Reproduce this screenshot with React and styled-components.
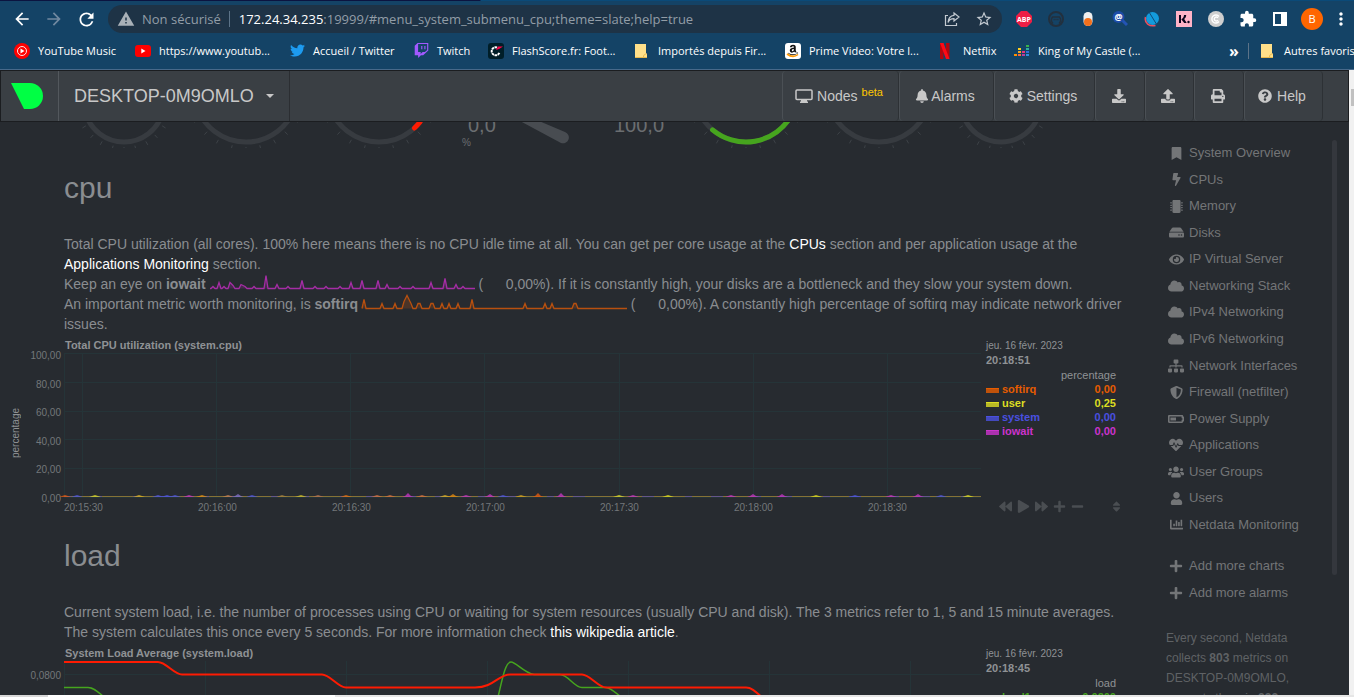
import React from "react";
import styled, { createGlobalStyle } from "styled-components";
import {
  FaBell, FaCog, FaDownload, FaUpload, FaPrint, FaQuestionCircle, FaBookmark, FaBolt,
  FaMicrochip, FaHdd, FaEye, FaCloud, FaSitemap, FaShieldAlt, FaBatteryHalf, FaHeartbeat,
  FaUsers, FaUser, FaChartBar, FaPlus, FaMinus, FaBackward, FaPlay, FaForward, FaSort,
  FaTwitter, FaTwitch, FaAmazon,
} from "react-icons/fa";
import { MdArrowBack, MdArrowForward, MdRefresh, MdWarning, MdStarBorder, MdExtension, MdMoreVert } from "react-icons/md";

const Global = createGlobalStyle`
  *, *::before, *::after { box-sizing: border-box; }
  html, body { margin: 0; background: #272b30; }
  body { font: 14px/20px "Liberation Sans", Arial, sans-serif; color: #8a8d90; }
  button { font: inherit; color: inherit; background: none; border: 0; padding: 0; }
  a { color: inherit; text-decoration: none; }
`;

const Window = styled.div`
  height: 100vh;
  display: flex;
  flex-direction: column;
  overflow: hidden;
`;

/* ---------- browser frame ---------- */

const Chrome = styled.header`
  flex: none;
  background: #144366;
  border-bottom: 1px solid #47698a;
  font: 11px/16px "Open Sans", "Noto Sans", sans-serif;
  color: #fff;
`;
const TabEdge = styled.div`
  height: 1px;
  background: linear-gradient(90deg, #0b1440 0 480px, #0b4a78 481px);
`;
const Toolbar = styled.div`
  display: flex;
  align-items: center;
  height: 36px;
  padding-left: 6px;
`;
const ToolButton = styled.button`
  flex: none;
  width: ${(p) => p.$w || 32}px;
  height: 28px;
  display: grid;
  place-items: center;
  color: ${(p) => p.$color || "#fff"};
`;
const Omnibox = styled.div`
  flex: 1;
  min-width: 0;
  display: flex;
  align-items: center;
  height: 28px;
  margin: 0 6px;
  padding: 0 2px 0 9px;
  border-radius: 14px;
  background: #1e3346;
  font-size: 13px;
  color: #929da7;
`;
const Security = styled.span`
  padding: 0 8px 0 7px;
  white-space: nowrap;
`;
const Rule = styled.span`
  flex: none;
  width: 1px;
  height: 16px;
  margin-right: ${(p) => p.$gap || 9}px;
  background: #5c7388;
`;
const Host = styled.label`
  color: #fff;
`;
const Address = styled.input`
  flex: 1;
  min-width: 0;
  padding: 0;
  border: 0;
  outline: 0;
  background: none;
  font: inherit;
  color: inherit;
`;
const Bookmarks = styled.nav`
  display: flex;
  align-items: center;
  height: 32px;
  padding: 0 0 5px 14px;
`;
const Bookmark = styled.a`
  flex: none;
  width: ${(p) => p.$w}px;
  display: flex;
  align-items: center;
  gap: 8px;
  white-space: nowrap;
  svg { flex: none; }
`;
const Filler = styled.span`
  flex: 1;
`;
const More = styled.button`
  width: 28px;
  font-size: 16px;
  font-weight: 700;
`;
const Avatar = styled.span`
  display: grid;
  place-items: center;
  width: 22px;
  height: 22px;
  border-radius: 50%;
  background: #ff6600;
  font-size: 11px;
`;

/* ---------- page frame ---------- */

const Body = styled.div`
  flex: 1;
  min-height: 0;
  display: flex;
`;
const Page = styled.div`
  flex: 1;
  min-width: 0;
  overflow: hidden;
  background: #272b30;
`;
const ScrollTrack = styled.div`
  flex: none;
  width: 5px;
  padding: 19px 0 0 2px;
  background: #f1f1f1;
`;
const ScrollThumb = styled.div`
  height: 17px;
  background: #c1c1c1;
`;
const StatusEdge = styled.div`
  flex: none;
  height: 2px;
  background: linear-gradient(90deg, #d8d8d8 0 48px, #fff 48px 335px, #e6e6e6 335px);
`;
const Navbar = styled.nav`
  display: flex;
  height: 52px;
  border: 1px solid #1b1d20;
  background: #3a3f44;
  color: #c8c8c8;
  text-shadow: 1px 1px 1px rgba(0, 0, 0, 0.4);
`;
const LogoLink = styled.a`
  width: 58px;
  display: flex;
  align-items: center;
  padding-left: 9px;
  border-right: 1px solid #53585d;
`;
const HostMenu = styled.button`
  width: 231px;
  display: flex;
  align-items: center;
  gap: 12px;
  padding-left: 15px;
  border-right: 1px solid #2b2e32;
  font-size: 18px;
`;
const Caret = styled.span`
  border: 4px solid transparent;
  border-top-color: #c8c8c8;
  border-bottom: 0;
`;
const NavItem = styled.button`
  width: ${(p) => p.$w}px;
  display: flex;
  align-items: center;
  justify-content: center;
  gap: ${(p) => p.$gap || 0}px;
  padding-right: 3px;
  border-left: 1px solid #4b5055;
  border-right: 1px solid #2d3135;
  border-radius: 4px;
`;
const Beta = styled.sup`
  align-self: center;
  margin-bottom: 8px;
  font-size: 11px;
  line-height: 10px;
  color: #ffc800;
`;
const NavEnd = styled.span`
  width: 25px;
`;
const Columns = styled.div`
  display: flex;
`;
const Main = styled.main`
  flex: 1;
  min-width: 0;
`;
const Gauges = styled.div`
  display: flex;
  height: 26px;
  padding-left: 64px;
  svg { flex: none; display: block; }
`;
const Heading = styled.h1`
  margin: 23px 0 29px;
  padding-left: 64px;
  font-size: 30px;
  font-weight: 400;
  line-height: 34px;
`;
const Help = styled.p`
  margin: 0;
  padding: 0 5px 0 64px;
`;
const Strong = styled.a`
  color: #fff;
`;
const Value = styled.span`
  display: inline-block;
  width: 50px;
  text-align: right;
`;

/* ---------- charts ---------- */

const ChartBox = styled.section`
  display: grid;
  grid-template-columns: 64px minmax(0, 1fr) 150px;
  height: 182px;
  font-size: 10px;
  line-height: 12px;
  color: #73777a;
`;
const AxisSide = styled.div`
  display: flex;
  justify-content: space-between;
  padding: ${(p) => p.$top}px 3px 0 10px;
`;
const AxisTitle = styled.div`
  align-self: flex-start;
  height: 166px;
  writing-mode: vertical-rl;
  transform: rotate(180deg);
  text-align: center;
  color: #8f9295;
`;
const Ticks = styled.div`
  flex: 1;
  display: flex;
  flex-direction: column;
  justify-content: space-between;
  height: ${(p) => p.$h}px;
  text-align: right;
`;
const Plot = styled.div`
  min-width: 0;
  svg { display: block; width: 100%; overflow: visible; }
`;
const ChartTitle = styled.h2`
  margin: 0;
  padding: 4px 0 0 1px;
  height: 19px;
  font-size: 11px;
  line-height: 15px;
  color: #8f9295;
`;
const TimeAxis = styled.div`
  display: flex;
  justify-content: space-between;
  padding: 5px 74px 0 0;
`;
const Legend = styled.div`
  display: flex;
  flex-direction: column;
  padding: 4px 15px 4px 5px;
  font-size: 11px;
  line-height: 14px;
`;
const LegendDate = styled.div`
  font-size: 10px;
  line-height: 15px;
  color: #8f9295;
`;
const LegendTime = styled.div`
  font-weight: 700;
  line-height: 15px;
  color: #8f9295;
`;
const LegendTable = styled.table`
  width: 100%;
  border-collapse: collapse;
  th, td { padding: 0; }
  thead th { text-align: right; font-weight: 400; color: #8f9295; }
`;
const Series = styled.tr`
  color: ${(p) => p.$color};
  font-weight: 700;
  th { text-align: left; }
  td { text-align: right; }
`;
const Swatch = styled.span`
  display: inline-block;
  width: 13px;
  height: 5px;
  margin-right: 3px;
  border-top: 1px solid ${(p) => p.$color};
  background: color-mix(in srgb, ${(p) => p.$color} 80%, #272b30);
`;
const Toolbox = styled.div`
  display: flex;
  margin: auto -14px 0 10px;
  color: #4a4e52;
`;
const ToolboxButton = styled.button`
  width: 18px;
  height: 12px;
  display: grid;
  place-items: center;
  &:last-child { margin-left: 21px; }
`;

/* ---------- sidebar ---------- */

const Sidebar = styled.aside`
  flex: none;
  width: 218px;
  display: flex;
  justify-content: space-between;
  padding: 18px 12px 0 35px;
  font-size: 13px;
  color: #737577;
`;
const MenuList = styled.ul`
  display: grid;
  grid-auto-rows: 1fr;
  height: ${(p) => p.$h}px;
  margin: 0 0 15px;
  padding: 0;
  list-style: none;
`;
const MenuLink = styled.a`
  height: 100%;
  display: grid;
  grid-template-columns: 20px auto;
  align-items: center;
  gap: 3px;
  svg { justify-self: center; }
`;
const Note = styled.p`
  width: 138px;
  margin: 22px 0 0;
  font-size: 12px;
  color: #5f6265;
`;
const MenuScroll = styled.div`
  width: 5px;
  height: 435px;
  border-radius: 3px;
  background: #34373d;
`;

/* ---------- drawings ---------- */

const FolderIcon = () => (
  <svg width="16" height="16" viewBox="0 0 16 16">
    <path d="M1 1h11v9l1 1v4H1z" fill="#ffe08a" />
    <path d="M1 14.500h12M9.500 14c0-2 1-3 3-3" fill="none" stroke="#e8b84c" />
  </svg>
);
const YtMusicIcon = () => (
  <svg width="16" height="16" viewBox="0 0 16 16">
    <circle cx="8" cy="8" r="8" fill="#f00" />
    <circle cx="8" cy="8" r="4.500" fill="none" stroke="#fff" strokeWidth=".9" />
    <path d="M6.500 5.500v5L10.500 8z" fill="#fff" />
  </svg>
);
const YoutubeIcon = () => (
  <svg width="16" height="16" viewBox="0 0 16 16">
    <rect y="2" width="16" height="12" rx="3" fill="#f00" />
    <path d="M6.300 5.500v5L10.500 8z" fill="#fff" />
  </svg>
);
const FlashIcon = () => (
  <svg width="16" height="16" viewBox="0 0 16 16">
    <rect width="16" height="16" rx="3" fill="#001e28" />
    <path d="M9 4.500a4 4 0 1 0 2.500 5" fill="none" stroke="#fff" strokeWidth="2" strokeDasharray="2.500 .6" />
    <path d="M8 7l2-3.500h5L11 6z" fill="#ff0046" />
  </svg>
);
const AmazonIcon = () => (
  <svg width="16" height="16" viewBox="0 0 16 16">
    <rect width="16" height="16" rx="3" fill="#fff" />
    <g transform="translate(2 1)"><FaAmazon size={12} color="#111" /></g>
    <path d="M2 11q6 4.500 11 .5" fill="none" stroke="#f90" strokeWidth="1.600" />
  </svg>
);
const NetflixIcon = () => (
  <svg width="16" height="16" viewBox="0 0 16 16">
    <path d="M1 0h3.500v16H1zM7 0h3.500v16H7z" fill="#b1060f" />
    <path d="M1 0h3.500l6 16H7z" fill="#ff0a16" />
  </svg>
);
const DEEZER = [
  [0, 11, "#ff9000"], [4, 11, "#f5693c"], [8, 11, "#b53da0"], [12, 11, "#2d8fe0"],
  [4, 8, "#f5a623"], [8, 8, "#e8337c"], [12, 8, "#2f6fd6"], [4, 5, "#ffce1f"], [12, 5, "#2fb0a0"], [12, 2, "#38b24a"],
];
const DeezerIcon = () => (
  <svg width="16" height="16" viewBox="0 0 16 16">
    {DEEZER.map(([x, y, c]) => <rect key={`${x}-${y}`} x={x} y={y} width="3" height="2" fill={c} />)}
  </svg>
);
const ShareIcon = () => (
  <svg width="16" height="16" viewBox="0 0 16 16" fill="none" stroke="#c3cad1" strokeWidth="1.200">
    <path d="M4 4.500H1.500v10h11V12M10 2l5 4-5 4V7.700C7 7.700 5 9 4 11.500 4.300 7.500 6.500 4.600 10 4.300z" />
  </svg>
);
const AbpIcon = () => (
  <svg width="16" height="16" viewBox="0 0 16 16">
    <path d="M5 0h6l5 5v6l-5 5H5l-5-5V5z" fill="#ed1e45" />
    <text x="8" y="10.500" textAnchor="middle" fontSize="7" fontWeight="700" fill="#fff">ABP</text>
  </svg>
);
const HeadsetIcon = () => (
  <svg width="16" height="16" viewBox="0 0 16 16" fill="none" stroke="#22303e" strokeWidth="2">
    <circle cx="8" cy="8" r="7" />
    <path d="M5 12.500c-2-2-2-4.500-.5-6.500h7c1.500 2 1.500 4.500-.5 6.500" strokeWidth="1.500" />
    <path d="M5.500 8.500h5" strokeWidth="1.500" strokeDasharray="1.200 .7" />
  </svg>
);
const PillIcon = () => (
  <svg width="16" height="16" viewBox="0 0 16 16">
    <rect x="3.500" y="1" width="9" height="14" rx="4.500" fill="#efefef" /><circle cx="8" cy="11" r="4" fill="#f3701c" />
  </svg>
);
const AtSearchIcon = () => (
  <svg width="16" height="16" viewBox="0 0 16 16">
    <path d="M10 9l5 5" stroke="#2454b4" strokeWidth="3" /><circle cx="6.500" cy="6" r="6" fill="#1d4ca8" />
    <text x="6.500" y="9" textAnchor="middle" fontSize="9" fontWeight="700" fill="#fff">@</text>
  </svg>
);
const GlobeIcon = () => (
  <svg width="16" height="16" viewBox="0 0 16 16">
    <circle cx="8.500" cy="7.500" r="6.500" fill="#139bdc" /><path d="M5 1l8 13" stroke="#114a78" />
    <path d="M1.500 6c-1.500 6 4 10 10 8.500" fill="none" stroke="#e8505e" strokeWidth="1.500" />
  </svg>
);
const KlarnaIcon = () => (
  <svg width="16" height="16" viewBox="0 0 16 16">
    <rect width="16" height="16" fill="#ffb3c7" />
    <path d="M3 4h2v8H3zM8 4h2.200c0 2-1 3.200-2 4l2.500 4H8.200L5.300 8.200C7 7.300 8 6 8 4z" fill="#0b051d" />
    <circle cx="12.500" cy="11" r="1.200" fill="#0b051d" />
  </svg>
);
const CoinIcon = () => (
  <svg width="16" height="16" viewBox="0 0 16 16">
    <circle cx="8" cy="8" r="8" fill="#cfcfcf" />
    <path d="M11 5.500a4 4 0 1 0 0 5M10 7a2 2 0 1 0 0 2" fill="none" stroke="#fff" strokeWidth="1.400" />
  </svg>
);
const PanelIcon = () => (
  <svg width="14" height="14" viewBox="0 0 14 14"><path d="M0 0h14v14H0zM2 2v10h6V2z" fill="#fff" fillRule="evenodd" /></svg>
);
const NetdataLogo = () => (
  <svg width="34" height="26" viewBox="0 0 34 26"><path d="M1 0h19a13 13 0 0 1 0 26h-6z" fill="#00ff44" /></svg>
);
const MonitorIcon = () => (
  <svg width="18" height="14" viewBox="0 0 18 14">
    <rect x="1" y="1" width="16" height="9.500" rx="1" fill="none" stroke="#c8c8c8" strokeWidth="1.500" />
    <path d="M6 11h6v1.500h1V14H5v-1.500h1z" fill="#c8c8c8" />
  </svg>
);

const point = (cx, cy, r, deg) => {
  const a = (deg * Math.PI) / 180;
  return [cx + r * Math.cos(a), cy + r * Math.sin(a)];
};
const arc = (cx, cy, r, a, b) => `M${point(cx, cy, r, a)}A${r} ${r} 0 0 1 ${point(cx, cy, r, b)}`;

function Gauge({ width, radius, fill, from, to }) {
  const cx = width / 2;
  const cy = 22 - radius;
  const r = radius - 2;
  const marks = [32, 47, 61, 76, 90, 104, 119, 133, 148];
  return (
    <svg width={width} height="26" viewBox={`0 0 ${width} 26`} fill="none">
      <path d={arc(cx, cy, r, 15, 165)} stroke="#373b40" strokeWidth="5" />
      {marks.map((m) => (
        <path key={m} d={`M${point(cx, cy, radius + 3, m)}L${point(cx, cy, radius + 7, m)}`} stroke="#3d4247" />
      ))}
      {fill && <path d={arc(cx, cy, r, from, to)} stroke={fill} strokeWidth="5" strokeLinecap="round" />}
    </svg>
  );
}
const MainGauge = () => (
  <svg width="225" height="26" viewBox="0 0 225 26" fill="#6b6e71" fontSize="20">
    <text x="18" y="10">0,0</text>
    <text x="164" y="10">100,0</text>
    <text x="12" y="24" fontSize="10">%</text>
    <path d="M70-1h19l26 11a5.500 5.500 0 0 1-4 11z" fill="#484c51" />
  </svg>
);

const IOWAIT = [[3, 2], [9, 6], [14, 2], [20, 6], [23, 3], [31, 4], [35, 2], [44, 2], [56, 13], [67, 4], [78, 2], [92, 8], [105, 2], [116, 2], [130, 2], [141, 6], [152, 8], [168, 8], [177, 4], [190, 2], [203, 2], [221, 6], [235, 10], [246, 4], [253, 2]];
const SOFTIRQ = [[2, 9], [20, 5], [33, 5], [42, 7], [45, 13], [49, 5], [56, 5], [58, 5], [69, 5], [71, 5], [80, 5], [87, 5], [96, 5], [110, 9], [163, 5], [183, 5], [190, 5], [212, 5], [214, 5]];

const InlineChart = styled.svg`
  overflow: visible;
`;

function Sparkline({ spikes, color }) {
  let d = "M0 13.500";
  spikes.forEach(([x, h], i) => {
    const prev = i ? spikes[i - 1][0] : -9;
    const next = i < spikes.length - 1 ? spikes[i + 1][0] : 999;
    if (x - prev > 4) d += `L${x - 2} 13.500`;
    d += `L${x} ${13.5 - h}`;
    if (next - x > 4) d += `L${x + 2} 13.500`;
  });
  d += "L265 13.500";
  return (
    <InlineChart width="265" height="14" viewBox="0 0 265 14">
      <path d={d} fill={color} fillOpacity=".25" stroke={color} strokeWidth="1.300" />
    </InlineChart>
  );
}

const CPU_X = [18, 152, 286, 420, 555, 689, 823];
const BUMPS = [
  [1, 1, "#e05a10"], [13, 1, "#4c55dd"], [31, 1, "#d8d820"], [75, 1, "#d8b020"], [94, 1, "#4c55dd"], [103, 1, "#4c55dd"],
  [111, 1, "#4c55dd"], [125, 1, "#c034c0"], [138, 1, "#e09010"], [164, 1, "#c08050"], [174, 2, "#8070c0"], [188, 1, "#4c55dd"],
  [218, 1, "#a08040"], [237, 1, "#d0c020"], [254, 1, "#b07050"], [282, 1, "#e07010"], [313, 1, "#d07040"], [326, 1, "#d07040"],
  [344, 3, "#c034c0"], [358, 1, "#d07040"], [381, 1, "#d8b020"], [389, 2, "#e08810"], [402, 1, "#c034c0"], [426, 2, "#c034c0"],
  [439, 1, "#4c55dd"], [457, 1, "#d0a020"], [474, 3, "#e05a10"], [497, 3, "#c034c0"], [555, 1, "#d8d820"], [569, 1, "#c034c0"],
  [604, 1, "#d8d820"], [667, 1, "#c034c0"], [689, 2, "#c034c0"], [718, 2, "#c034c0"], [752, 1, "#d8d820"], [791, 1, "#4c55dd"],
  [827, 1, "#c034c0"], [854, 2, "#c034c0"], [877, 1, "#4c55dd"], [904, 1, "#d8d820"],
];
const CpuPlot = () => (
  <svg height="144" viewBox="0 0 917 144" preserveAspectRatio="none">
    <g stroke="#253438">
      {[0, 29, 58, 86, 115, 144].map((y) => <path key={y} d={`M0 ${y + 0.5}H917`} />)}
      {[0, ...CPU_X].map((x) => <path key={x} d={`M${x + 0.5} 0V144`} />)}
    </g>
    <path d="M0 143.500H917" stroke="#857236" />
    <path d="M0 143.500H917" stroke="#65568a" strokeDasharray="7 19 12 31" />
    {BUMPS.map(([x, h, c]) => <path key={x} d={`M${x - 6} 144l3-1 3-${h} 3 ${h} 3 1z`} fill={c} fillOpacity=".8" />)}
  </svg>
);
const LoadPlot = () => (
  <svg height="46" viewBox="0 0 917 46" preserveAspectRatio="none" fill="none">
    <g stroke="#253438">
      <path d="M0 13.500H917" />
      {[0, 141, 282, 423, 564, 705, 846].map((x) => <path key={x} d={`M${x + 0.5} 0V46`} />)}
    </g>
    <path
      d="M0 26.500H24C30 26.500 34 31 40 36M434 36C438 20 441 1 447 1C452 1 460 12 470 13.500H496C504 13.500 510 26.500 518 26.500H542C546 26.500 551 31 557 36"
      stroke="#46a51e" strokeWidth="1.500"
    />
    <path
      d="M0 1H94C102 1 110 13.500 118 13.500H258C266 13.500 274 26.500 282 26.500H411C430 26.500 434 13.500 446 13.500H518C526 13.500 534 26.500 542 26.500H682C688 26.500 692 31 700 38"
      stroke="#fe1b02" strokeWidth="2"
    />
  </svg>
);

/* ---------- data ---------- */

const BOOKMARKS = [
  ["YouTube Music", 121, <YtMusicIcon />],
  ["https://www.youtub...", 155, <YoutubeIcon />],
  ["Accueil / Twitter", 124, <FaTwitter size={15} color="#1d9bf0" />],
  ["Twitch", 74, <FaTwitch size={15} color="#a259ff" />],
  ["FlashScore.fr: Foot...", 146, <FlashIcon />],
  ["Importés depuis Fir...", 151, <FolderIcon />],
  ["Prime Video: Votre l...", 154, <AmazonIcon />],
  ["Netflix", 75, <NetflixIcon />],
  ["King of My Castle (...", 140, <DeezerIcon />],
];
const EXTENSIONS = [
  ["Adblock Plus", <AbpIcon />], ["Casque", <HeadsetIcon />], ["Capsule", <PillIcon />], ["Recherche", <AtSearchIcon />],
  ["Globe", <GlobeIcon />], ["Klarna", <KlarnaIcon />], ["Crédits", <CoinIcon />],
  ["Extensions", <MdExtension size={18} />], ["Panneau latéral", <PanelIcon />], ["Profil", <Avatar>B</Avatar>],
];
const MENU = [
  ["System Overview", FaBookmark, 13], ["CPUs", FaBolt, 13], ["Memory", FaMicrochip, 13], ["Disks", FaHdd, 15],
  ["IP Virtual Server", FaEye, 15], ["Networking Stack", FaCloud, 16], ["IPv4 Networking", FaCloud, 16],
  ["IPv6 Networking", FaCloud, 16], ["Network Interfaces", FaSitemap, 16], ["Firewall (netfilter)", FaShieldAlt, 13],
  ["Power Supply", FaBatteryHalf, 16], ["Applications", FaHeartbeat, 14], ["User Groups", FaUsers, 16],
  ["Users", FaUser, 13], ["Netdata Monitoring", FaChartBar, 13],
];
const ADD_MENU = [["Add more charts", FaPlus, 14], ["Add more alarms", FaPlus, 14]];
const TOOLBOX = [["Back", FaBackward], ["Play", FaPlay], ["Forward", FaForward], ["Zoom in", FaPlus], ["Zoom out", FaMinus], ["Resize", FaSort]];

const Menu = ({ items, height }) => (
  <MenuList $h={height}>
    {items.map(([label, Icon, size]) => (
      <li key={label}><MenuLink href="#"><Icon size={size} />{label}</MenuLink></li>
    ))}
  </MenuList>
);

function Chart({ title, unit, axisTop, axisHeight, yTicks, xTicks, plot, time, series, axisTitle, toolbox }) {
  return (
    <ChartBox>
      <AxisSide $top={axisTop}>
        {axisTitle && <AxisTitle>{axisTitle}</AxisTitle>}
        <Ticks $h={axisHeight}>{yTicks.map((t) => <span key={t}>{t}</span>)}</Ticks>
      </AxisSide>
      <Plot>
        <ChartTitle>{title}</ChartTitle>
        {plot}
        {xTicks && <TimeAxis>{xTicks.map((t) => <span key={t}>{t}</span>)}</TimeAxis>}
      </Plot>
      <Legend>
        <LegendDate>jeu. 16 févr. 2023</LegendDate>
        <LegendTime>{time}</LegendTime>
        <LegendTable>
          <thead><tr><th colSpan="2">{unit}</th></tr></thead>
          <tbody>
            {series.map(([name, value, color]) => (
              <Series key={name} $color={color}><th><Swatch $color={color} />{name}</th><td>{value}</td></Series>
            ))}
          </tbody>
        </LegendTable>
        {toolbox && (
          <Toolbox>
            {TOOLBOX.map(([label, Icon]) => <ToolboxButton key={label} aria-label={label}><Icon size={13} /></ToolboxButton>)}
          </Toolbox>
        )}
      </Legend>
    </ChartBox>
  );
}

export default function App() {
  return (
    <Window>
      <Global />
      <Chrome>
        <TabEdge />
        <Toolbar>
          <ToolButton aria-label="Précédent"><MdArrowBack size={20} /></ToolButton>
          <ToolButton aria-label="Suivant" $color="#7189a0"><MdArrowForward size={20} /></ToolButton>
          <ToolButton aria-label="Actualiser"><MdRefresh size={21} /></ToolButton>
          <Omnibox>
            <MdWarning size={18} color="#a9b1b8" />
            <Security>Non sécurisé</Security>
            <Rule />
            <Host htmlFor="address">172.24.34.235</Host>
            <Address id="address" defaultValue=":19999/#menu_system_submenu_cpu;theme=slate;help=true" />
            <ToolButton aria-label="Partager"><ShareIcon /></ToolButton>
            <ToolButton aria-label="Favori" $color="#c3cad1"><MdStarBorder size={18} /></ToolButton>
          </Omnibox>
          {EXTENSIONS.map(([label, icon]) => <ToolButton key={label} aria-label={label}>{icon}</ToolButton>)}
          <ToolButton aria-label="Menu" $w={26}><MdMoreVert size={20} /></ToolButton>
        </Toolbar>
        <Bookmarks>
          {BOOKMARKS.map(([label, w, icon]) => <Bookmark key={label} href="#" $w={w}>{icon}{label}</Bookmark>)}
          <Filler />
          <More aria-label="Plus de favoris">»</More>
          <Rule $gap={11} />
          <Bookmark href="#" $w={94}><FolderIcon />Autres favoris</Bookmark>
        </Bookmarks>
      </Chrome>
      <Body>
        <Page>
          <Navbar>
            <LogoLink href="#" aria-label="Netdata"><NetdataLogo /></LogoLink>
            <HostMenu>DESKTOP-0M9OMLO <Caret /></HostMenu>
            <Filler />
            <NavItem $w={117} $gap={4}><MonitorIcon />Nodes<Beta>beta</Beta></NavItem>
            <NavItem $w={95} $gap={2}><FaBell size={14} />Alarms</NavItem>
            <NavItem $w={101} $gap={4}><FaCog size={14} />Settings</NavItem>
            <NavItem $w={50} aria-label="Import"><FaDownload size={14} /></NavItem>
            <NavItem $w={49} aria-label="Export"><FaUpload size={14} /></NavItem>
            <NavItem $w={50} aria-label="Print"><FaPrint size={14} /></NavItem>
            <NavItem $w={79} $gap={5}><FaQuestionCircle size={14} />Help</NavItem>
            <NavEnd />
          </Navbar>
          <Columns>
            <Main>
              <Gauges>
                <Gauge width={120} radius={42} />
                <Gauge width={124} radius={54} />
                <Gauge width={142} radius={54} fill="#fe1b02" from={38} to={47} />
                <MainGauge />
                <Gauge width={142} radius={54} fill="#46a51e" from={30} to={130} />
                <Gauge width={124} radius={54} />
                <Gauge width={120} radius={42} />
              </Gauges>
              <Heading>cpu</Heading>
              <Help>
                Total CPU utilization (all cores). 100% here means there is no CPU idle time at all. You can get per core usage at
                the <Strong href="#">CPUs</Strong> section and per application usage at the <Strong href="#">Applications Monitoring</Strong> section.
                <br />
                Keep an eye on <b>iowait</b> <Sparkline spikes={IOWAIT} color="#a52da5" /> (<Value>0,00</Value>%). If it is
                constantly high, your disks are a bottleneck and they slow your system down.
                <br />
                An important metric worth monitoring, is <b>softirq</b> <Sparkline spikes={SOFTIRQ} color="#b8500f" /> (<Value>0,00</Value>%).
                A constantly high percentage of softirq may indicate network driver issues.
              </Help>
              <Chart
                title="Total CPU utilization (system.cpu)"
                axisTitle="percentage"
                unit="percentage"
                axisTop={16}
                axisHeight={155}
                yTicks={["100,00", "80,00", "60,00", "40,00", "20,00", "0,00"]}
                xTicks={["20:15:30", "20:16:00", "20:16:30", "20:17:00", "20:17:30", "20:18:00", "20:18:30"]}
                plot={<CpuPlot />}
                time="20:18:51"
                series={[["softirq", "0,00", "#e65c00"], ["user", "0,25", "#dddd22"], ["system", "0,00", "#4a50e0"], ["iowait", "0,00", "#cc33cc"]]}
                toolbox
              />
              <Heading>load</Heading>
              <Help>
                Current system load, i.e. the number of processes using CPU or waiting for system resources (usually CPU and disk).
                The 3 metrics refer to 1, 5 and 15 minute averages. The system calculates this once every 5 seconds. For more
                information check <Strong href="#">this wikipedia article</Strong>.
              </Help>
              <Chart
                title="System Load Average (system.load)"
                unit="load"
                axisTop={28}
                axisHeight={12}
                yTicks={["0,0800"]}
                plot={<LoadPlot />}
                time="20:18:45"
                series={[["load1", "0,0200", "#46a51e"]]}
              />
            </Main>
            <Sidebar>
              <div>
                <Menu items={MENU} height={398} />
                <Menu items={ADD_MENU} height={53} />
                <Note>
                  Every second, Netdata collects <b>803</b> metrics on DESKTOP-0M9OMLO, presents them in <b>232</b> charts
                </Note>
              </div>
              <MenuScroll />
            </Sidebar>
          </Columns>
        </Page>
        <ScrollTrack><ScrollThumb /></ScrollTrack>
      </Body>
      <StatusEdge />
    </Window>
  );
}
